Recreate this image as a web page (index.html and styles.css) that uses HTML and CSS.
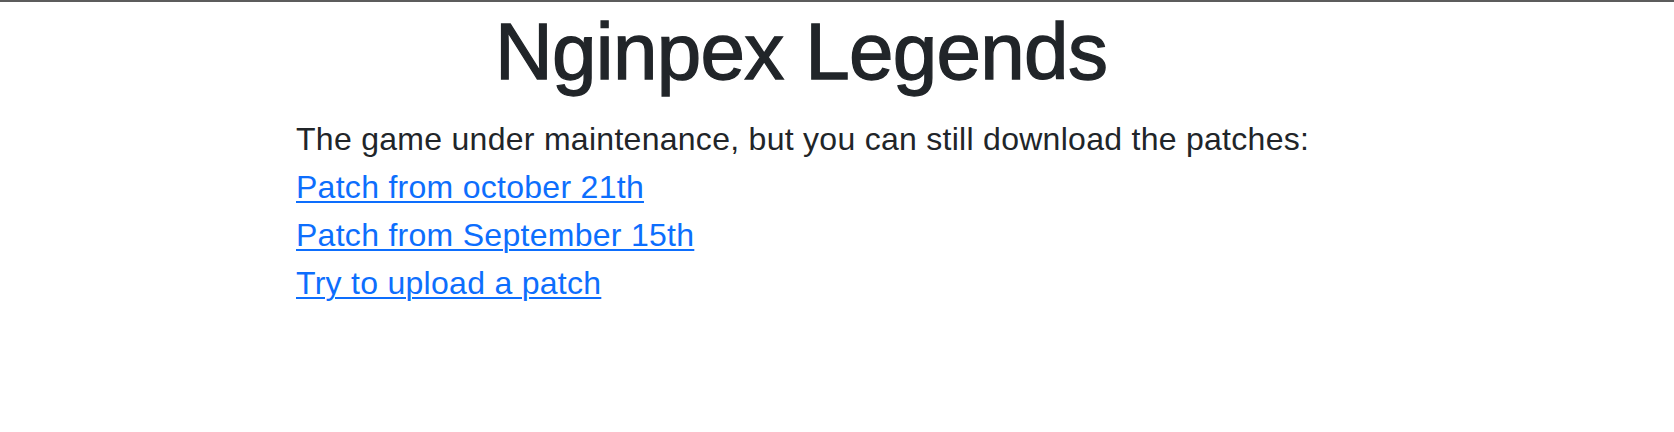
FILE: index.html
```html
<!DOCTYPE html>
<html lang="en">
<head>
<meta charset="utf-8">
<title>Nginpex Legends</title>
<link rel="stylesheet" href="styles.css">
</head>
<body>
<div class="topbar"></div>
<main class="page">
  <h1 class="title">Nginpex Legends</h1>
  <p class="line">The game under maintenance, but you can still download the patches:</p>
  <p class="line"><a class="link" href="#">Patch from october 21th</a></p>
  <p class="line"><a class="link" href="#">Patch from September 15th</a></p>
  <p class="line"><a class="link" href="#">Try to upload a patch</a></p>
</main>
</body>
</html>
```
FILE: styles.css
```css
html, body {
  margin: 0;
  padding: 0;
  background: #ffffff;
}
body {
  font-family: "Liberation Sans", Arial, sans-serif;
  color: #212529;
}
.topbar {
  height: 2px;
  background: #5c5c5c;
}
.page {
  padding-left: 296px;
}
.title {
  margin: 2px 0 15px 199px;
  font-size: 80px;
  font-weight: 400;
  line-height: 96px;
  letter-spacing: -0.7px;
  -webkit-text-stroke: 1.3px #212529;
}
.line {
  margin: 0;
  font-size: 32px;
  line-height: 48px;
  letter-spacing: 0.28px;
}
.link {
  color: #0d6efd;
  text-decoration: underline;
  text-decoration-thickness: 2px;
  text-underline-offset: 3px;
}
```
